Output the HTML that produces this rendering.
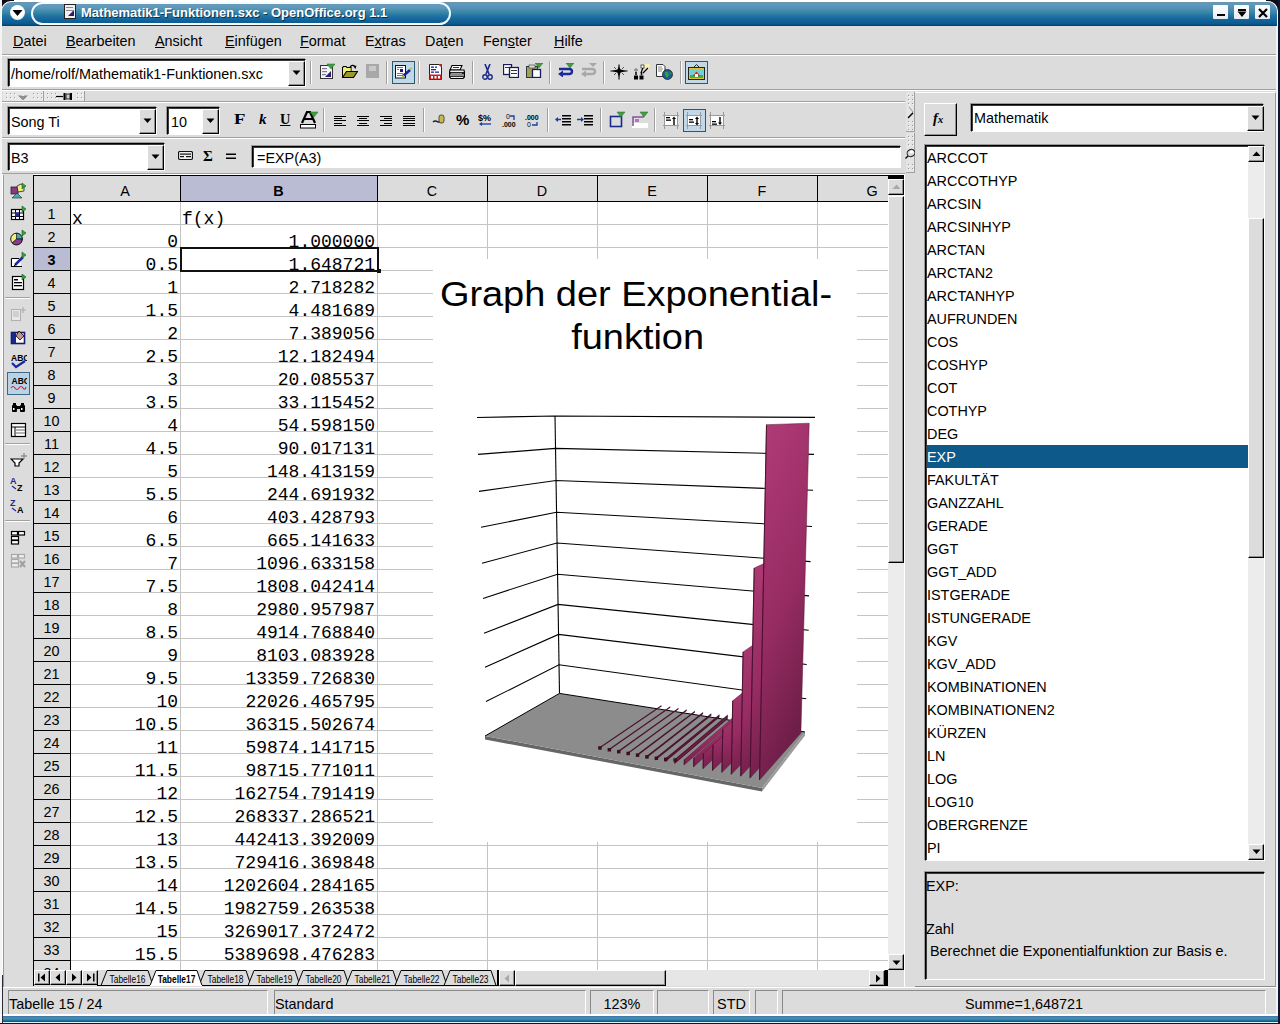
<!DOCTYPE html>
<html><head><meta charset="utf-8"><style>
*{margin:0;padding:0;box-sizing:border-box}
html,body{width:1280px;height:1024px;overflow:hidden;background:#dcdcdc;font-family:"Liberation Sans",sans-serif;font-size:14.4px;color:#000}
.ab{position:absolute}
.t{position:absolute;white-space:nowrap;line-height:1}
.mono{font-family:"Liberation Mono",monospace}
.sunk{position:absolute;background:#fff;border-top:1px solid #000;border-left:1px solid #000;border-right:1px solid #fff;border-bottom:1px solid #fff;box-shadow:inset 1px 1px 0 #3a3a3a,-1px -1px 0 #9a9a9a}
.btn{position:absolute;background:#dcdcdc;border-top:1px solid #fff;border-left:1px solid #fff;border-right:1px solid #000;border-bottom:1px solid #000;box-shadow:inset -1px -1px 0 #909090}
.sep{position:absolute;width:2px;border-left:1px solid #a0a0a0;border-right:1px solid #fff}
.hsep{position:absolute;height:2px;border-top:1px solid #a0a0a0;border-bottom:1px solid #fff}
</style></head><body>

<div class="ab" style="left:0;top:0;width:1280px;height:1024px;background:#dcdcdc"></div>
<div class="ab" style="left:0;top:0;width:14px;height:14px;background:#0a0a18"></div>
<div class="ab" style="left:1266px;top:0;width:14px;height:14px;background:#0a0a18"></div>
<div class="ab" style="left:1278px;top:0;width:2px;height:1024px;background:#10142a"></div>
<div class="ab" style="left:0;top:0;width:2px;height:1024px;background:#f4f4f4"></div>
<div class="ab" style="left:14px;top:0;width:1252px;height:2px;background:#fff"></div>
<div class="ab" style="left:1px;top:1px;width:1277px;height:25px;border-radius:10px 10px 0 0;background:#fff"></div>
<div class="ab" style="left:2px;top:2px;width:1275px;height:24px;border-radius:9px 9px 0 0;background:linear-gradient(#7090a4 0px,#5e9cbc 2px,#558fb8 6px,#3a88a8 10px,#2272a2 14px,#12649a 18px,#0a5a8e 22px,#003c5c 24px)"></div>
<div class="ab" style="left:31px;top:2px;width:420px;height:23px;border-radius:12px;border:2px solid #f4fbff;background:linear-gradient(#6a9cbc 0px,#5a98bc 4px,#3a88a8 8px,#2272a2 12px,#12649a 16px,#0a5a8e 20px)"></div>
<div class="ab" style="left:10px;top:5px;width:15px;height:15px;border-radius:50%;background:radial-gradient(circle at 50% 40%,#fff 50%,#d0d8e8)"></div>
<svg class="ab" style="left:11px;top:8px" width="13" height="10"><polygon points="1.5,2 11.5,2 6.5,8" fill="#000"/></svg>
<svg class="ab" style="left:64px;top:4px" width="13" height="16"><rect x="0.5" y="0.5" width="11" height="14" fill="#f0f0f0" stroke="#222"/><rect x="2" y="3" width="7" height="1" fill="#889"/><rect x="2" y="6" width="7" height="1" fill="#889"/><polygon points="4,12 10,6 10,12" fill="#2a1a6a"/></svg>
<div class="t" style="left:82px;top:7px;font-weight:bold;font-size:13px;color:#000;opacity:.55">Mathematik1-Funktionen.sxc - OpenOffice.org 1.1</div>
<div class="t" style="left:81px;top:6px;font-weight:bold;font-size:13px;color:#fff">Mathematik1-Funktionen.sxc - OpenOffice.org 1.1</div>
<div class="ab" style="left:1213px;top:5px;width:15px;height:14px;background:linear-gradient(#fff,#e6ecf4);border-radius:1px"></div>
<div class="ab" style="left:1217px;top:14px;width:8px;height:2px;background:#000"></div>
<div class="ab" style="left:1234px;top:5px;width:15px;height:14px;background:linear-gradient(#fff,#e6ecf4);border-radius:1px"></div>
<div class="ab" style="left:1238px;top:9px;width:8px;height:2px;background:#000"></div>
<svg class="ab" style="left:1237px;top:11px" width="10" height="7"><polygon points="0.5,0.5 9.5,0.5 5,6" fill="#000"/></svg>
<div class="ab" style="left:1255px;top:5px;width:15px;height:14px;background:linear-gradient(#fff,#e6ecf4);border-radius:1px"></div>
<svg class="ab" style="left:1258px;top:8px" width="10" height="10"><path d="M1,1 L9,9 M9,1 L1,9" stroke="#000" stroke-width="2.2"/></svg>
<div class="t" style="left:13px;top:34px;font-size:14.4px"><u>D</u>atei</div>
<div class="t" style="left:66px;top:34px;font-size:14.4px"><u>B</u>earbeiten</div>
<div class="t" style="left:155px;top:34px;font-size:14.4px"><u>A</u>nsicht</div>
<div class="t" style="left:225px;top:34px;font-size:14.4px"><u>E</u>infügen</div>
<div class="t" style="left:300px;top:34px;font-size:14.4px"><u>F</u>ormat</div>
<div class="t" style="left:365px;top:34px;font-size:14.4px">E<u>x</u>tras</div>
<div class="t" style="left:425px;top:34px;font-size:14.4px">Da<u>t</u>en</div>
<div class="t" style="left:483px;top:34px;font-size:14.4px">Fen<u>s</u>ter</div>
<div class="t" style="left:554px;top:34px;font-size:14.4px"><u>H</u>ilfe</div>
<div class="hsep" style="left:2px;top:54px;width:1276px"></div>
<div class="sunk" style="left:8px;top:59px;width:298px;height:28px"></div>
<div class="t" style="left:11px;top:67px;font-size:14.4px">/home/rolf/Mathematik1-Funktionen.sxc</div>
<div class="btn" style="left:288px;top:61px;width:17px;height:25px"></div>
<svg class="ab" style="left:292px;top:70px" width="9" height="6" viewBox="0 0 9 6"><polygon points="0.5,0.5 8.5,0.5 4.5,5" fill="#000"/></svg>
<div class="sep" style="left:310px;top:61px;height:23px"></div>
<div class="sep" style="left:386px;top:61px;height:23px"></div>
<div class="sep" style="left:418px;top:61px;height:23px"></div>
<div class="sep" style="left:472px;top:61px;height:23px"></div>
<div class="sep" style="left:549px;top:61px;height:23px"></div>
<div class="sep" style="left:603px;top:61px;height:23px"></div>
<div class="sep" style="left:680px;top:61px;height:23px"></div>
<svg class="ab" style="left:319px;top:63px" width="17" height="17" viewBox="0 0 17 17"><rect x="1.5" y="2.5" width="12" height="13" fill="#f4f4f4" stroke="#333"/><rect x="3" y="5" width="5" height="1.2" fill="#7a7a9a"/><rect x="3" y="8" width="5" height="1.2" fill="#7a7a9a"/><rect x="3" y="11" width="4" height="1.2" fill="#7a7a9a"/><polygon points="6,14 12,8 12,14" fill="#2a1a7a"/><polygon points="8,1 16,1 12,6" fill="#40a040" stroke="#2a6a2a" stroke-width="0.5"/></svg>
<svg class="ab" style="left:342px;top:64px" width="16" height="15" viewBox="0 0 16 15"><path d="M0.5,13.5 L0.5,3.5 L1.5,2.5 L4,2.5 L5,3.5 L9,3.5 L9,7" fill="#f0f078" stroke="#000" stroke-width="1.1"/><rect x="1.2" y="4" width="7.3" height="9" fill="#f0f078"/><polygon points="0.5,13.5 4.5,7.5 15.5,7.5 11.5,13.5" fill="#9a9a28" stroke="#000" stroke-width="1.1"/><path d="M8,3 Q10.5,0 13,2.5" stroke="#000" stroke-width="1.2" fill="none"/><polygon points="11.5,2.5 14.5,1.5 13.5,5" fill="#000"/></svg>
<svg class="ab" style="left:366px;top:64px" width="14" height="15" viewBox="0 0 14 15"><rect x="0" y="0" width="13" height="14" fill="#a8a8a8"/><rect x="3" y="2" width="7" height="5" fill="#c8c8c8"/></svg>
<div class="ab" style="left:392px;top:61px;width:23px;height:23px;background:#c0d8e8;border:1px solid #2a5a70"></div>
<svg class="ab" style="left:395px;top:65px" width="18" height="15" viewBox="0 0 18 15"><rect x="0.5" y="0.5" width="10" height="12.5" fill="#fff" stroke="#111"/><rect x="2" y="2" width="6" height="1" fill="#777"/><rect x="2" y="4" width="2" height="1" fill="#777"/><rect x="5" y="4" width="3" height="3" fill="#1a1a8a"/><rect x="2" y="8" width="6" height="1" fill="#777"/><rect x="2" y="10" width="6" height="1" fill="#777"/><path d="M8,11 L15,5" stroke="#1a2090" stroke-width="2.6"/><path d="M15,4 L17,3" stroke="#9ac070" stroke-width="1.5"/><path d="M7,12 L9,10.5" stroke="#c8d040" stroke-width="1.5"/></svg>
<svg class="ab" style="left:429px;top:64px" width="14" height="16" viewBox="0 0 14 16"><path d="M0.5,0.5 L10,0.5 L12.5,3 L12.5,15.5 L0.5,15.5 Z" fill="#fff" stroke="#222"/><polygon points="9.5,0 13,0 13,3.5" fill="#c02020"/><rect x="2" y="2.5" width="3" height="1.3" fill="#1a2aa0"/><rect x="6" y="2.5" width="2" height="1.3" fill="#1a2aa0"/><rect x="2" y="5" width="5" height="1.3" fill="#1a2aa0"/><rect x="2" y="7.5" width="3" height="1.3" fill="#1a2aa0"/><rect x="6" y="7.5" width="4" height="1.3" fill="#1a2aa0"/><rect x="0.5" y="10.5" width="12" height="5" fill="#c82020"/><rect x="2" y="12" width="2" height="2.5" fill="#fff"/><rect x="5.5" y="12" width="2" height="2.5" fill="#fff"/><rect x="9" y="12" width="2" height="2.5" fill="#fff"/></svg>
<svg class="ab" style="left:449px;top:65px" width="16" height="14" viewBox="0 0 16 14"><polygon points="3,0.5 13,0.5 11,5 1,5" fill="#fff" stroke="#000" stroke-width="1.1"/><rect x="4" y="2" width="6" height="1" fill="#1a2aa0"/><path d="M1,5 L15,5 L15.5,7 L15.5,12 L14,13.5 L2,13.5 L0.5,12 L0.5,7 Z" fill="#eee" stroke="#000" stroke-width="1.1"/><rect x="1" y="7" width="14" height="2.5" fill="#222"/><rect x="2" y="8" width="11" height="1" fill="#9a9a9a"/><rect x="1" y="10.5" width="14" height="1.5" fill="#333"/></svg>
<svg class="ab" style="left:482px;top:64px" width="11" height="16" viewBox="0 0 11 16"><path d="M3,0 L7,10 M8,0 L4,10" stroke="#1a2a8a" stroke-width="1.6"/><circle cx="3" cy="13" r="2.2" fill="none" stroke="#1a2a8a" stroke-width="1.4"/><circle cx="8" cy="13" r="2.2" fill="none" stroke="#1a2a8a" stroke-width="1.4"/></svg>
<svg class="ab" style="left:503px;top:64px" width="16" height="14" viewBox="0 0 16 14"><rect x="0.5" y="0.5" width="8" height="10" fill="#fff" stroke="#1a1a5a" stroke-width="1.3"/><rect x="6.5" y="3.5" width="9" height="10" fill="#fff" stroke="#1a1a5a" stroke-width="1.3"/><rect x="2" y="3" width="4" height="1" fill="#333"/><rect x="8" y="6" width="6" height="1" fill="#333"/><rect x="8" y="9" width="6" height="1" fill="#333"/></svg>
<svg class="ab" style="left:526px;top:63px" width="18" height="15" viewBox="0 0 18 15"><rect x="0.5" y="3.5" width="11" height="11" fill="#a0a060" stroke="#333"/><rect x="3" y="2" width="6" height="3" fill="#ddd" stroke="#333" stroke-width="0.6"/><rect x="6.5" y="6.5" width="8" height="8" fill="#fff" stroke="#1a1a5a" stroke-width="1.3"/><polygon points="9,0 17,0 13,5" fill="#40a040" stroke="#2a6a2a" stroke-width="0.5"/></svg>
<svg class="ab" style="left:557px;top:63px" width="18" height="14" viewBox="0 0 18 14"><path d="M2,6 L12,6 Q15,6 15,8.5 Q15,11 12,11 L5,11" stroke="#1a2a9a" stroke-width="2.4" fill="none"/><polygon points="1,11 6,7.5 6,14.5" fill="#1a2a9a"/><polygon points="9,0 17,0 13,5" fill="#40a040" stroke="#2a6a2a" stroke-width="0.5"/></svg>
<svg class="ab" style="left:580px;top:63px" width="18" height="14" viewBox="0 0 18 14"><path d="M2,6 L12,6 Q15,6 15,8.5 Q15,11 12,11 L5,11" stroke="#a8a8a8" stroke-width="2.4" fill="none"/><polygon points="1,11 6,7.5 6,14.5" fill="#a8a8a8"/><polygon points="9,0 17,0 13,4" fill="#a8a8a8"/></svg>
<svg class="ab" style="left:610px;top:64px" width="18" height="16" viewBox="0 0 18 16"><path d="M9,0.5 L9,15.5 M0.5,7 L17.5,7" stroke="#000" stroke-width="1.1"/><polygon points="9,2 11,7 9,13 7,7" fill="#000"/><polygon points="2,7 9,5 16,7 9,9" fill="#000"/><path d="M4,3 L6,5 M14,3 L12,5 M4,11 L6,9 M14,11 L12,9" stroke="#333" stroke-width="0.8"/></svg>
<svg class="ab" style="left:633px;top:64px" width="17" height="16" viewBox="0 0 17 16"><rect x="1" y="11.5" width="4" height="4" fill="#000"/><rect x="6.5" y="11.5" width="4" height="4" fill="#000"/><path d="M3,11 L3,8 M8.5,11 L8.5,8" stroke="#000" stroke-width="1.5"/><path d="M1,6 L5,6 M3,4 L3,8" stroke="#888" stroke-width="1.3"/><polygon points="11,0 17,0 16,6 12,4" fill="#f4f4b0"/><path d="M8,9 L10.5,2 M10,9 L15,4" stroke="#000" stroke-width="1.2"/><rect x="8" y="1" width="3" height="3" fill="#fff" stroke="#000" stroke-width="0.6"/></svg>
<svg class="ab" style="left:656px;top:64px" width="17" height="16" viewBox="0 0 17 16"><path d="M0.5,0.5 L7,0.5 L9,2.5 L9,12.5 L0.5,12.5 Z" fill="#fff" stroke="#333"/><path d="M2,3 L6,3 M2,5 L7,5 M2,7 L6,7" stroke="#888"/><circle cx="11.5" cy="10.5" r="5" fill="#1a5aa0" stroke="#222" stroke-width="0.8"/><path d="M8.5,9 Q10,7 12,8 L13,11 L11,14 L9.5,12 Z" fill="#30a040"/><path d="M13,7 L15.5,9 L15,11 Z" fill="#30a040"/></svg>
<div class="ab" style="left:685px;top:61px;width:23px;height:23px;background:#c0d8e8;border:1px solid #2a5a70"></div>
<svg class="ab" style="left:688px;top:64px" width="17" height="16" viewBox="0 0 17 16"><path d="M5.5,3.5 L8.5,0.5 L11.5,3.5" stroke="#222" fill="none"/><rect x="0.5" y="3.5" width="16" height="12" fill="#e0c030" stroke="#222"/><rect x="2" y="5" width="13" height="9" fill="#70d0d8"/><rect x="2" y="11" width="13" height="3" fill="#40b040"/><polygon points="5,12 8.5,7.5 12,12" fill="#d02020"/><rect x="7" y="10" width="3" height="3" fill="#fff"/></svg>
<div class="hsep" style="left:2px;top:89px;width:1274px"></div>
<div class="ab" style="left:3px;top:91px;width:41px;height:11px;background:#e8e8e8;border-bottom:1px solid #a0a0a0;border-right:1px solid #a0a0a0"></div>
<div class="ab" style="left:44px;top:91px;width:41px;height:11px;background:#e8e8e8;border-bottom:1px solid #a0a0a0;border-right:1px solid #a0a0a0"></div>
<svg class="ab" style="left:3px;top:91px" width="41" height="11" viewBox="0 0 41 11"><rect x="3" y="2" width="1" height="1" fill="#9a9a9a"/><rect x="4" y="3" width="1" height="1" fill="#fff"/><rect x="3" y="6" width="1" height="1" fill="#9a9a9a"/><rect x="4" y="7" width="1" height="1" fill="#fff"/><rect x="7" y="2" width="1" height="1" fill="#9a9a9a"/><rect x="8" y="3" width="1" height="1" fill="#fff"/><rect x="7" y="6" width="1" height="1" fill="#9a9a9a"/><rect x="8" y="7" width="1" height="1" fill="#fff"/><rect x="11" y="2" width="1" height="1" fill="#9a9a9a"/><rect x="12" y="3" width="1" height="1" fill="#fff"/><rect x="11" y="6" width="1" height="1" fill="#9a9a9a"/><rect x="12" y="7" width="1" height="1" fill="#fff"/><rect x="30" y="2" width="1" height="1" fill="#9a9a9a"/><rect x="31" y="3" width="1" height="1" fill="#fff"/><rect x="30" y="6" width="1" height="1" fill="#9a9a9a"/><rect x="31" y="7" width="1" height="1" fill="#fff"/><rect x="34" y="2" width="1" height="1" fill="#9a9a9a"/><rect x="35" y="3" width="1" height="1" fill="#fff"/><rect x="34" y="6" width="1" height="1" fill="#9a9a9a"/><rect x="35" y="7" width="1" height="1" fill="#fff"/><rect x="38" y="2" width="1" height="1" fill="#9a9a9a"/><rect x="39" y="3" width="1" height="1" fill="#fff"/><rect x="38" y="6" width="1" height="1" fill="#9a9a9a"/><rect x="39" y="7" width="1" height="1" fill="#fff"/></svg>
<svg class="ab" style="left:44px;top:91px" width="41" height="11" viewBox="0 0 41 11"><rect x="3" y="2" width="1" height="1" fill="#9a9a9a"/><rect x="4" y="3" width="1" height="1" fill="#fff"/><rect x="3" y="6" width="1" height="1" fill="#9a9a9a"/><rect x="4" y="7" width="1" height="1" fill="#fff"/><rect x="7" y="2" width="1" height="1" fill="#9a9a9a"/><rect x="8" y="3" width="1" height="1" fill="#fff"/><rect x="7" y="6" width="1" height="1" fill="#9a9a9a"/><rect x="8" y="7" width="1" height="1" fill="#fff"/><rect x="11" y="2" width="1" height="1" fill="#9a9a9a"/><rect x="12" y="3" width="1" height="1" fill="#fff"/><rect x="11" y="6" width="1" height="1" fill="#9a9a9a"/><rect x="12" y="7" width="1" height="1" fill="#fff"/><rect x="33" y="2" width="1" height="1" fill="#9a9a9a"/><rect x="34" y="3" width="1" height="1" fill="#fff"/><rect x="33" y="6" width="1" height="1" fill="#9a9a9a"/><rect x="34" y="7" width="1" height="1" fill="#fff"/><rect x="37" y="2" width="1" height="1" fill="#9a9a9a"/><rect x="38" y="3" width="1" height="1" fill="#fff"/><rect x="37" y="6" width="1" height="1" fill="#9a9a9a"/><rect x="38" y="7" width="1" height="1" fill="#fff"/></svg>
<svg class="ab" style="left:18px;top:95px" width="10" height="6" viewBox="0 0 10 6"><path d="M1,0.5 L5,4.5 L9,0.5 M3,0.5 L5,2.5 L7,0.5" stroke="#333" fill="none"/></svg>
<svg class="ab" style="left:56px;top:92px" width="17" height="9" viewBox="0 0 17 9"><path d="M0,4.5 L7,4.5" stroke="#000" stroke-width="1.2"/><rect x="7.5" y="1" width="2" height="7" fill="#000"/><rect x="10" y="2" width="4" height="5" fill="#ccc" stroke="#000" stroke-width="0.8"/><rect x="14" y="1" width="2" height="7" fill="#000"/></svg>
<div class="hsep" style="left:2px;top:101px;width:903px"></div>
<div class="sunk" style="left:8px;top:107px;width:149px;height:28px"></div>
<div class="t" style="left:11px;top:115px;font-size:14.4px">Song Ti</div>
<div class="btn" style="left:139px;top:109px;width:17px;height:25px"></div>
<svg class="ab" style="left:143px;top:118px" width="9" height="6" viewBox="0 0 9 6"><polygon points="0.5,0.5 8.5,0.5 4.5,5" fill="#000"/></svg>
<div class="sunk" style="left:167px;top:107px;width:53px;height:28px"></div>
<div class="t" style="left:171px;top:115px;font-size:14.4px">10</div>
<div class="btn" style="left:202px;top:109px;width:17px;height:25px"></div>
<svg class="ab" style="left:206px;top:118px" width="9" height="6" viewBox="0 0 9 6"><polygon points="0.5,0.5 8.5,0.5 4.5,5" fill="#000"/></svg>
<div class="sep" style="left:323px;top:108px;height:24px"></div>
<div class="sep" style="left:423px;top:108px;height:24px"></div>
<div class="sep" style="left:547px;top:108px;height:24px"></div>
<div class="sep" style="left:600px;top:108px;height:24px"></div>
<div class="sep" style="left:654px;top:108px;height:24px"></div>
<div class="t" style="left:234px;top:112px;font-family:'Liberation Serif',serif;font-weight:bold;font-size:15px;transform:scaleX(1.25);transform-origin:left">F</div>
<div class="t" style="left:259px;top:112px;font-family:'Liberation Serif',serif;font-weight:bold;font-style:italic;font-size:15px">k</div>
<div class="t" style="left:280px;top:112px;font-family:'Liberation Serif',serif;font-weight:bold;font-size:14.4px;text-decoration:underline">U</div>
<svg class="ab" style="left:300px;top:111px" width="19" height="18" viewBox="0 0 19 18"><path d="M2,12 L7,1 L10,1 L15,12 M4.5,8 L12.5,8" stroke="#000" stroke-width="2.2" fill="none"/><rect x="0.5" y="13.5" width="15" height="3.5" fill="#fff" stroke="#000"/><polygon points="10,1 18,1 14,6" fill="#40a040" stroke="#2a6a2a" stroke-width="0.5"/></svg>
<svg class="ab" style="left:334px;top:115px" width="12" height="12" viewBox="0 0 12 12"><rect x="0" y="1" width="12" height="1" fill="#000"/><rect x="0" y="3" width="8" height="1" fill="#000"/><rect x="0" y="5" width="12" height="1" fill="#000"/><rect x="0" y="8" width="8" height="1" fill="#000"/><rect x="0" y="10" width="12" height="1" fill="#000"/></svg>
<svg class="ab" style="left:357px;top:115px" width="12" height="12" viewBox="0 0 12 12"><rect x="0.0" y="1" width="12" height="1" fill="#000"/><rect x="2.0" y="3" width="8" height="1" fill="#000"/><rect x="0.0" y="5" width="12" height="1" fill="#000"/><rect x="2.0" y="8" width="8" height="1" fill="#000"/><rect x="0.0" y="10" width="12" height="1" fill="#000"/></svg>
<svg class="ab" style="left:380px;top:115px" width="12" height="12" viewBox="0 0 12 12"><rect x="0" y="1" width="12" height="1" fill="#000"/><rect x="4" y="3" width="8" height="1" fill="#000"/><rect x="0" y="5" width="12" height="1" fill="#000"/><rect x="4" y="8" width="8" height="1" fill="#000"/><rect x="0" y="10" width="12" height="1" fill="#000"/></svg>
<svg class="ab" style="left:403px;top:115px" width="12" height="12" viewBox="0 0 12 12"><rect x="0" y="1" width="12" height="1" fill="#000"/><rect x="0" y="3" width="12" height="1" fill="#000"/><rect x="0" y="5" width="12" height="1" fill="#000"/><rect x="0" y="8" width="12" height="1" fill="#000"/><rect x="0" y="10" width="12" height="1" fill="#000"/></svg>
<svg class="ab" style="left:432px;top:114px" width="15" height="12" viewBox="0 0 15 12"><path d="M1,8 Q3,6 6,8 L10,8" stroke="#222" stroke-width="1.5" fill="none"/><rect x="7" y="1" width="5" height="8" rx="2" fill="#c8b850" stroke="#333" stroke-width="0.8"/></svg>
<div class="t" style="left:456px;top:112px;font-weight:bold;font-size:15px">%</div>
<svg class="ab" style="left:478px;top:113px" width="15" height="15" viewBox="0 0 15 15"><text x="0" y="8" font-size="9" font-family="Liberation Sans" font-weight="bold">$%</text><path d="M3,11 L13,11" stroke="#1a3aa0" stroke-width="1.3"/><polygon points="1,11 4,9 4,13" fill="#1a3aa0"/></svg>
<svg class="ab" style="left:502px;top:113px" width="15" height="15" viewBox="0 0 15 15"><text x="4" y="6" font-size="7" font-family="Liberation Sans">0</text><text x="0" y="14" font-size="7" font-family="Liberation Sans" font-weight="bold">.000</text><path d="M8,3 L12,3 L12,7" stroke="#1a3aa0" stroke-width="1.3" fill="none"/></svg>
<svg class="ab" style="left:525px;top:113px" width="15" height="15" viewBox="0 0 15 15"><text x="0" y="7" font-size="7" font-family="Liberation Sans" font-weight="bold">.000</text><text x="2" y="14" font-size="7" font-family="Liberation Sans">0</text><path d="M12,9 L12,12 L7,12" stroke="#1a3aa0" stroke-width="1.3" fill="none"/></svg>
<svg class="ab" style="left:555px;top:113px" width="17" height="14" viewBox="0 0 17 14"><rect x="7" y="2" width="9" height="1.5" fill="#000"/><rect x="7" y="5" width="9" height="1.5" fill="#000"/><rect x="7" y="8" width="9" height="1.5" fill="#000"/><rect x="7" y="11" width="9" height="1.5" fill="#000"/><path d="M1,6.5 L6,6.5" stroke="#1a3aa0" stroke-width="1.5"/><polygon points="0,6.5 3,4 3,9" fill="#1a3aa0"/></svg>
<svg class="ab" style="left:577px;top:113px" width="17" height="14" viewBox="0 0 17 14"><rect x="7" y="2" width="9" height="1.5" fill="#000"/><rect x="7" y="5" width="9" height="1.5" fill="#000"/><rect x="7" y="8" width="9" height="1.5" fill="#000"/><rect x="7" y="11" width="9" height="1.5" fill="#000"/><path d="M0,6.5 L5,6.5" stroke="#1a3aa0" stroke-width="1.5"/><polygon points="7,6.5 4,4 4,9" fill="#1a3aa0"/></svg>
<svg class="ab" style="left:609px;top:111px" width="17" height="17" viewBox="0 0 17 17"><rect x="1.5" y="5.5" width="11" height="10" fill="none" stroke="#1a2a8a" stroke-width="1.6"/><polygon points="8,1 16,1 12,6" fill="#40a040" stroke="#2a6a2a" stroke-width="0.5"/></svg>
<svg class="ab" style="left:632px;top:111px" width="17" height="17" viewBox="0 0 17 17"><rect x="0" y="12" width="16" height="5" fill="#fff"/><path d="M1,15 L1,6 L12,6" stroke="#8050a0" stroke-width="1.5" fill="none"/><rect x="3" y="8" width="4" height="3" fill="#c070c0"/><polygon points="8,1 16,1 12,6" fill="#40a040" stroke="#2a6a2a" stroke-width="0.5"/></svg>
<svg class="ab" style="left:663px;top:112px" width="17" height="17" viewBox="0 0 17 17"><rect x="2" y="3.5" width="12" height="10" fill="#fff"/><path d="M1.5,0 L1.5,17 M14.5,0 L14.5,17 M0,3.5 L16,3.5 M0,13.5 L16,13.5" stroke="#9a9a9a"/><rect x="3" y="5" width="4" height="1.3" fill="#000"/><rect x="3" y="7.5" width="5" height="1.3" fill="#000"/><path d="M11,13 L11,6" stroke="#000" stroke-width="1.4"/><polygon points="9,7 11,4.5 13,7" fill="#000"/></svg>
<div class="ab" style="left:683px;top:109px;width:23px;height:23px;background:#c0d8e8;border:1px solid #2a5a70"></div>
<svg class="ab" style="left:686px;top:112px" width="17" height="17" viewBox="0 0 17 17"><rect x="2" y="3.5" width="12" height="10" fill="#fff"/><path d="M1.5,0 L1.5,17 M14.5,0 L14.5,17 M0,3.5 L16,3.5 M0,13.5 L16,13.5" stroke="#9a9a9a"/><rect x="3" y="7" width="4" height="1.3" fill="#000"/><rect x="3" y="9.5" width="5" height="1.3" fill="#000"/><path d="M11,6 L11,12" stroke="#000" stroke-width="1.4"/><polygon points="9,7 11,4.5 13,7" fill="#000"/><polygon points="9,11 11,13.5 13,11" fill="#000"/></svg>
<svg class="ab" style="left:709px;top:112px" width="17" height="17" viewBox="0 0 17 17"><rect x="2" y="3.5" width="12" height="10" fill="#fff"/><path d="M1.5,0 L1.5,17 M14.5,0 L14.5,17 M0,3.5 L16,3.5 M0,13.5 L16,13.5" stroke="#9a9a9a"/><rect x="3" y="9" width="4" height="1.3" fill="#000"/><rect x="3" y="11.5" width="5" height="1.3" fill="#000"/><path d="M11,5 L11,11" stroke="#000" stroke-width="1.4"/><polygon points="9,10.5 11,13 13,10.5" fill="#000"/></svg>
<div class="hsep" style="left:2px;top:137px;width:903px"></div>
<div class="sunk" style="left:8px;top:143px;width:157px;height:28px"></div>
<div class="t" style="left:11px;top:151px;font-size:14.4px">B3</div>
<div class="btn" style="left:147px;top:145px;width:17px;height:25px"></div>
<svg class="ab" style="left:151px;top:154px" width="9" height="6" viewBox="0 0 9 6"><polygon points="0.5,0.5 8.5,0.5 4.5,5" fill="#000"/></svg>
<svg class="ab" style="left:178px;top:151px" width="15" height="10" viewBox="0 0 15 10"><rect x="0.5" y="0.5" width="14" height="8" rx="1.5" fill="#eee" stroke="#111" stroke-width="1.2"/><rect x="2" y="2.5" width="11" height="1.2" fill="#111"/><rect x="2" y="5" width="4" height="1.2" fill="#111"/><rect x="8" y="5" width="5" height="1.2" fill="#111"/></svg>
<div class="t" style="left:203px;top:149px;font-family:'Liberation Serif',serif;font-weight:bold;font-size:15px">&Sigma;</div>
<svg class="ab" style="left:226px;top:153px" width="10" height="7" viewBox="0 0 10 7"><rect x="0" y="0.5" width="10" height="1.5" fill="#000"/><rect x="0" y="4.5" width="10" height="1.5" fill="#000"/></svg>
<div class="sunk" style="left:252px;top:146px;width:649px;height:22px"></div>
<div class="t" style="left:257px;top:151px;font-size:14.4px">=EXP(A3)</div>
<div class="hsep" style="left:2px;top:173px;width:903px"></div>
<div class="ab" style="left:2px;top:174px;width:31px;height:813px;background:#dcdcdc;border-left:1px solid #fff"></div>
<div class="ab" style="left:33px;top:175px;width:855px;height:795px;background:#fff;overflow:hidden">
<div class="ab" style="left:37px;top:49px;width:900px;height:1px;background:#c4c4c4"></div>
<div class="ab" style="left:37px;top:72px;width:900px;height:1px;background:#c4c4c4"></div>
<div class="ab" style="left:37px;top:95px;width:900px;height:1px;background:#c4c4c4"></div>
<div class="ab" style="left:37px;top:118px;width:900px;height:1px;background:#c4c4c4"></div>
<div class="ab" style="left:37px;top:141px;width:900px;height:1px;background:#c4c4c4"></div>
<div class="ab" style="left:37px;top:164px;width:900px;height:1px;background:#c4c4c4"></div>
<div class="ab" style="left:37px;top:187px;width:900px;height:1px;background:#c4c4c4"></div>
<div class="ab" style="left:37px;top:210px;width:900px;height:1px;background:#c4c4c4"></div>
<div class="ab" style="left:37px;top:233px;width:900px;height:1px;background:#c4c4c4"></div>
<div class="ab" style="left:37px;top:256px;width:900px;height:1px;background:#c4c4c4"></div>
<div class="ab" style="left:37px;top:279px;width:900px;height:1px;background:#c4c4c4"></div>
<div class="ab" style="left:37px;top:302px;width:900px;height:1px;background:#c4c4c4"></div>
<div class="ab" style="left:37px;top:325px;width:900px;height:1px;background:#c4c4c4"></div>
<div class="ab" style="left:37px;top:348px;width:900px;height:1px;background:#c4c4c4"></div>
<div class="ab" style="left:37px;top:371px;width:900px;height:1px;background:#c4c4c4"></div>
<div class="ab" style="left:37px;top:394px;width:900px;height:1px;background:#c4c4c4"></div>
<div class="ab" style="left:37px;top:417px;width:900px;height:1px;background:#c4c4c4"></div>
<div class="ab" style="left:37px;top:440px;width:900px;height:1px;background:#c4c4c4"></div>
<div class="ab" style="left:37px;top:463px;width:900px;height:1px;background:#c4c4c4"></div>
<div class="ab" style="left:37px;top:486px;width:900px;height:1px;background:#c4c4c4"></div>
<div class="ab" style="left:37px;top:509px;width:900px;height:1px;background:#c4c4c4"></div>
<div class="ab" style="left:37px;top:532px;width:900px;height:1px;background:#c4c4c4"></div>
<div class="ab" style="left:37px;top:555px;width:900px;height:1px;background:#c4c4c4"></div>
<div class="ab" style="left:37px;top:578px;width:900px;height:1px;background:#c4c4c4"></div>
<div class="ab" style="left:37px;top:601px;width:900px;height:1px;background:#c4c4c4"></div>
<div class="ab" style="left:37px;top:624px;width:900px;height:1px;background:#c4c4c4"></div>
<div class="ab" style="left:37px;top:647px;width:900px;height:1px;background:#c4c4c4"></div>
<div class="ab" style="left:37px;top:670px;width:900px;height:1px;background:#c4c4c4"></div>
<div class="ab" style="left:37px;top:693px;width:900px;height:1px;background:#c4c4c4"></div>
<div class="ab" style="left:37px;top:716px;width:900px;height:1px;background:#c4c4c4"></div>
<div class="ab" style="left:37px;top:739px;width:900px;height:1px;background:#c4c4c4"></div>
<div class="ab" style="left:37px;top:762px;width:900px;height:1px;background:#c4c4c4"></div>
<div class="ab" style="left:37px;top:785px;width:900px;height:1px;background:#c4c4c4"></div>
<div class="ab" style="left:37px;top:808px;width:900px;height:1px;background:#c4c4c4"></div>
<div class="ab" style="left:37px;top:831px;width:900px;height:1px;background:#c4c4c4"></div>
<div class="ab" style="left:147px;top:26px;width:1px;height:800px;background:#c4c4c4"></div>
<div class="ab" style="left:344px;top:26px;width:1px;height:800px;background:#c4c4c4"></div>
<div class="ab" style="left:454px;top:26px;width:1px;height:800px;background:#c4c4c4"></div>
<div class="ab" style="left:564px;top:26px;width:1px;height:800px;background:#c4c4c4"></div>
<div class="ab" style="left:674px;top:26px;width:1px;height:800px;background:#c4c4c4"></div>
<div class="ab" style="left:784px;top:26px;width:1px;height:800px;background:#c4c4c4"></div>
<div class="ab" style="left:894px;top:26px;width:1px;height:800px;background:#c4c4c4"></div>
<div class="ab" style="left:0;top:0;width:900px;height:27px;background:#dcdcdc;border-top:1px solid #000;border-bottom:1px solid #000"></div>
<div class="ab" style="left:147px;top:1px;width:197px;height:25px;background:#b9bcd2"></div>
<div class="ab" style="left:0;top:0;width:1px;height:800px;background:#000"></div>
<div class="ab" style="left:37px;top:0;width:1px;height:27px;background:#000"></div>
<div class="t" style="left:37px;width:110px;text-align:center;top:9px;font-size:14.4px;font-weight:normal">A</div>
<div class="ab" style="left:147px;top:0;width:1px;height:27px;background:#000"></div>
<div class="t" style="left:147px;width:197px;text-align:center;top:9px;font-size:14.4px;font-weight:bold">B</div>
<div class="ab" style="left:344px;top:0;width:1px;height:27px;background:#000"></div>
<div class="t" style="left:344px;width:110px;text-align:center;top:9px;font-size:14.4px;font-weight:normal">C</div>
<div class="ab" style="left:454px;top:0;width:1px;height:27px;background:#000"></div>
<div class="t" style="left:454px;width:110px;text-align:center;top:9px;font-size:14.4px;font-weight:normal">D</div>
<div class="ab" style="left:564px;top:0;width:1px;height:27px;background:#000"></div>
<div class="t" style="left:564px;width:110px;text-align:center;top:9px;font-size:14.4px;font-weight:normal">E</div>
<div class="ab" style="left:674px;top:0;width:1px;height:27px;background:#000"></div>
<div class="t" style="left:674px;width:110px;text-align:center;top:9px;font-size:14.4px;font-weight:normal">F</div>
<div class="ab" style="left:784px;top:0;width:1px;height:27px;background:#000"></div>
<div class="t" style="left:784px;width:110px;text-align:center;top:9px;font-size:14.4px;font-weight:normal">G</div>
<div class="ab" style="left:0;top:27px;width:38px;height:800px;background:#dcdcdc;border-right:1px solid #000;border-left:1px solid #000"></div>
<div class="ab" style="left:1px;top:72px;width:36px;height:23px;background:#b9bcd2"></div>
<div class="ab" style="left:0;top:49px;width:38px;height:1px;background:#000"></div>
<div class="t" style="left:0;width:37px;text-align:center;top:32px;font-size:14.4px;font-weight:normal">1</div>
<div class="ab" style="left:0;top:72px;width:38px;height:1px;background:#000"></div>
<div class="t" style="left:0;width:37px;text-align:center;top:55px;font-size:14.4px;font-weight:normal">2</div>
<div class="ab" style="left:0;top:95px;width:38px;height:1px;background:#000"></div>
<div class="t" style="left:0;width:37px;text-align:center;top:78px;font-size:14.4px;font-weight:bold">3</div>
<div class="ab" style="left:0;top:118px;width:38px;height:1px;background:#000"></div>
<div class="t" style="left:0;width:37px;text-align:center;top:101px;font-size:14.4px;font-weight:normal">4</div>
<div class="ab" style="left:0;top:141px;width:38px;height:1px;background:#000"></div>
<div class="t" style="left:0;width:37px;text-align:center;top:124px;font-size:14.4px;font-weight:normal">5</div>
<div class="ab" style="left:0;top:164px;width:38px;height:1px;background:#000"></div>
<div class="t" style="left:0;width:37px;text-align:center;top:147px;font-size:14.4px;font-weight:normal">6</div>
<div class="ab" style="left:0;top:187px;width:38px;height:1px;background:#000"></div>
<div class="t" style="left:0;width:37px;text-align:center;top:170px;font-size:14.4px;font-weight:normal">7</div>
<div class="ab" style="left:0;top:210px;width:38px;height:1px;background:#000"></div>
<div class="t" style="left:0;width:37px;text-align:center;top:193px;font-size:14.4px;font-weight:normal">8</div>
<div class="ab" style="left:0;top:233px;width:38px;height:1px;background:#000"></div>
<div class="t" style="left:0;width:37px;text-align:center;top:216px;font-size:14.4px;font-weight:normal">9</div>
<div class="ab" style="left:0;top:256px;width:38px;height:1px;background:#000"></div>
<div class="t" style="left:0;width:37px;text-align:center;top:239px;font-size:14.4px;font-weight:normal">10</div>
<div class="ab" style="left:0;top:279px;width:38px;height:1px;background:#000"></div>
<div class="t" style="left:0;width:37px;text-align:center;top:262px;font-size:14.4px;font-weight:normal">11</div>
<div class="ab" style="left:0;top:302px;width:38px;height:1px;background:#000"></div>
<div class="t" style="left:0;width:37px;text-align:center;top:285px;font-size:14.4px;font-weight:normal">12</div>
<div class="ab" style="left:0;top:325px;width:38px;height:1px;background:#000"></div>
<div class="t" style="left:0;width:37px;text-align:center;top:308px;font-size:14.4px;font-weight:normal">13</div>
<div class="ab" style="left:0;top:348px;width:38px;height:1px;background:#000"></div>
<div class="t" style="left:0;width:37px;text-align:center;top:331px;font-size:14.4px;font-weight:normal">14</div>
<div class="ab" style="left:0;top:371px;width:38px;height:1px;background:#000"></div>
<div class="t" style="left:0;width:37px;text-align:center;top:354px;font-size:14.4px;font-weight:normal">15</div>
<div class="ab" style="left:0;top:394px;width:38px;height:1px;background:#000"></div>
<div class="t" style="left:0;width:37px;text-align:center;top:377px;font-size:14.4px;font-weight:normal">16</div>
<div class="ab" style="left:0;top:417px;width:38px;height:1px;background:#000"></div>
<div class="t" style="left:0;width:37px;text-align:center;top:400px;font-size:14.4px;font-weight:normal">17</div>
<div class="ab" style="left:0;top:440px;width:38px;height:1px;background:#000"></div>
<div class="t" style="left:0;width:37px;text-align:center;top:423px;font-size:14.4px;font-weight:normal">18</div>
<div class="ab" style="left:0;top:463px;width:38px;height:1px;background:#000"></div>
<div class="t" style="left:0;width:37px;text-align:center;top:446px;font-size:14.4px;font-weight:normal">19</div>
<div class="ab" style="left:0;top:486px;width:38px;height:1px;background:#000"></div>
<div class="t" style="left:0;width:37px;text-align:center;top:469px;font-size:14.4px;font-weight:normal">20</div>
<div class="ab" style="left:0;top:509px;width:38px;height:1px;background:#000"></div>
<div class="t" style="left:0;width:37px;text-align:center;top:492px;font-size:14.4px;font-weight:normal">21</div>
<div class="ab" style="left:0;top:532px;width:38px;height:1px;background:#000"></div>
<div class="t" style="left:0;width:37px;text-align:center;top:515px;font-size:14.4px;font-weight:normal">22</div>
<div class="ab" style="left:0;top:555px;width:38px;height:1px;background:#000"></div>
<div class="t" style="left:0;width:37px;text-align:center;top:538px;font-size:14.4px;font-weight:normal">23</div>
<div class="ab" style="left:0;top:578px;width:38px;height:1px;background:#000"></div>
<div class="t" style="left:0;width:37px;text-align:center;top:561px;font-size:14.4px;font-weight:normal">24</div>
<div class="ab" style="left:0;top:601px;width:38px;height:1px;background:#000"></div>
<div class="t" style="left:0;width:37px;text-align:center;top:584px;font-size:14.4px;font-weight:normal">25</div>
<div class="ab" style="left:0;top:624px;width:38px;height:1px;background:#000"></div>
<div class="t" style="left:0;width:37px;text-align:center;top:607px;font-size:14.4px;font-weight:normal">26</div>
<div class="ab" style="left:0;top:647px;width:38px;height:1px;background:#000"></div>
<div class="t" style="left:0;width:37px;text-align:center;top:630px;font-size:14.4px;font-weight:normal">27</div>
<div class="ab" style="left:0;top:670px;width:38px;height:1px;background:#000"></div>
<div class="t" style="left:0;width:37px;text-align:center;top:653px;font-size:14.4px;font-weight:normal">28</div>
<div class="ab" style="left:0;top:693px;width:38px;height:1px;background:#000"></div>
<div class="t" style="left:0;width:37px;text-align:center;top:676px;font-size:14.4px;font-weight:normal">29</div>
<div class="ab" style="left:0;top:716px;width:38px;height:1px;background:#000"></div>
<div class="t" style="left:0;width:37px;text-align:center;top:699px;font-size:14.4px;font-weight:normal">30</div>
<div class="ab" style="left:0;top:739px;width:38px;height:1px;background:#000"></div>
<div class="t" style="left:0;width:37px;text-align:center;top:722px;font-size:14.4px;font-weight:normal">31</div>
<div class="ab" style="left:0;top:762px;width:38px;height:1px;background:#000"></div>
<div class="t" style="left:0;width:37px;text-align:center;top:745px;font-size:14.4px;font-weight:normal">32</div>
<div class="ab" style="left:0;top:785px;width:38px;height:1px;background:#000"></div>
<div class="t" style="left:0;width:37px;text-align:center;top:768px;font-size:14.4px;font-weight:normal">33</div>
<div class="ab" style="left:0;top:808px;width:38px;height:1px;background:#000"></div>
<div class="t" style="left:0;width:37px;text-align:center;top:791px;font-size:14.4px;font-weight:normal">34</div>
<div class="ab" style="left:0;top:831px;width:38px;height:1px;background:#000"></div>
<div class="t" style="left:0;width:37px;text-align:center;top:814px;font-size:14.4px;font-weight:normal">35</div>
<div class="t mono" style="left:39px;top:35px;font-size:18px">x</div>
<div class="t mono" style="left:149px;top:35px;font-size:18px">f(x)</div>
<div class="t mono" style="right:710px;top:58px;font-size:18px">0</div>
<div class="t mono" style="right:513px;top:58px;font-size:18px">1.000000</div>
<div class="t mono" style="right:710px;top:81px;font-size:18px">0.5</div>
<div class="t mono" style="right:513px;top:81px;font-size:18px">1.648721</div>
<div class="t mono" style="right:710px;top:104px;font-size:18px">1</div>
<div class="t mono" style="right:513px;top:104px;font-size:18px">2.718282</div>
<div class="t mono" style="right:710px;top:127px;font-size:18px">1.5</div>
<div class="t mono" style="right:513px;top:127px;font-size:18px">4.481689</div>
<div class="t mono" style="right:710px;top:150px;font-size:18px">2</div>
<div class="t mono" style="right:513px;top:150px;font-size:18px">7.389056</div>
<div class="t mono" style="right:710px;top:173px;font-size:18px">2.5</div>
<div class="t mono" style="right:513px;top:173px;font-size:18px">12.182494</div>
<div class="t mono" style="right:710px;top:196px;font-size:18px">3</div>
<div class="t mono" style="right:513px;top:196px;font-size:18px">20.085537</div>
<div class="t mono" style="right:710px;top:219px;font-size:18px">3.5</div>
<div class="t mono" style="right:513px;top:219px;font-size:18px">33.115452</div>
<div class="t mono" style="right:710px;top:242px;font-size:18px">4</div>
<div class="t mono" style="right:513px;top:242px;font-size:18px">54.598150</div>
<div class="t mono" style="right:710px;top:265px;font-size:18px">4.5</div>
<div class="t mono" style="right:513px;top:265px;font-size:18px">90.017131</div>
<div class="t mono" style="right:710px;top:288px;font-size:18px">5</div>
<div class="t mono" style="right:513px;top:288px;font-size:18px">148.413159</div>
<div class="t mono" style="right:710px;top:311px;font-size:18px">5.5</div>
<div class="t mono" style="right:513px;top:311px;font-size:18px">244.691932</div>
<div class="t mono" style="right:710px;top:334px;font-size:18px">6</div>
<div class="t mono" style="right:513px;top:334px;font-size:18px">403.428793</div>
<div class="t mono" style="right:710px;top:357px;font-size:18px">6.5</div>
<div class="t mono" style="right:513px;top:357px;font-size:18px">665.141633</div>
<div class="t mono" style="right:710px;top:380px;font-size:18px">7</div>
<div class="t mono" style="right:513px;top:380px;font-size:18px">1096.633158</div>
<div class="t mono" style="right:710px;top:403px;font-size:18px">7.5</div>
<div class="t mono" style="right:513px;top:403px;font-size:18px">1808.042414</div>
<div class="t mono" style="right:710px;top:426px;font-size:18px">8</div>
<div class="t mono" style="right:513px;top:426px;font-size:18px">2980.957987</div>
<div class="t mono" style="right:710px;top:449px;font-size:18px">8.5</div>
<div class="t mono" style="right:513px;top:449px;font-size:18px">4914.768840</div>
<div class="t mono" style="right:710px;top:472px;font-size:18px">9</div>
<div class="t mono" style="right:513px;top:472px;font-size:18px">8103.083928</div>
<div class="t mono" style="right:710px;top:495px;font-size:18px">9.5</div>
<div class="t mono" style="right:513px;top:495px;font-size:18px">13359.726830</div>
<div class="t mono" style="right:710px;top:518px;font-size:18px">10</div>
<div class="t mono" style="right:513px;top:518px;font-size:18px">22026.465795</div>
<div class="t mono" style="right:710px;top:541px;font-size:18px">10.5</div>
<div class="t mono" style="right:513px;top:541px;font-size:18px">36315.502674</div>
<div class="t mono" style="right:710px;top:564px;font-size:18px">11</div>
<div class="t mono" style="right:513px;top:564px;font-size:18px">59874.141715</div>
<div class="t mono" style="right:710px;top:587px;font-size:18px">11.5</div>
<div class="t mono" style="right:513px;top:587px;font-size:18px">98715.771011</div>
<div class="t mono" style="right:710px;top:610px;font-size:18px">12</div>
<div class="t mono" style="right:513px;top:610px;font-size:18px">162754.791419</div>
<div class="t mono" style="right:710px;top:633px;font-size:18px">12.5</div>
<div class="t mono" style="right:513px;top:633px;font-size:18px">268337.286521</div>
<div class="t mono" style="right:710px;top:656px;font-size:18px">13</div>
<div class="t mono" style="right:513px;top:656px;font-size:18px">442413.392009</div>
<div class="t mono" style="right:710px;top:679px;font-size:18px">13.5</div>
<div class="t mono" style="right:513px;top:679px;font-size:18px">729416.369848</div>
<div class="t mono" style="right:710px;top:702px;font-size:18px">14</div>
<div class="t mono" style="right:513px;top:702px;font-size:18px">1202604.284165</div>
<div class="t mono" style="right:710px;top:725px;font-size:18px">14.5</div>
<div class="t mono" style="right:513px;top:725px;font-size:18px">1982759.263538</div>
<div class="t mono" style="right:710px;top:748px;font-size:18px">15</div>
<div class="t mono" style="right:513px;top:748px;font-size:18px">3269017.372472</div>
<div class="t mono" style="right:710px;top:771px;font-size:18px">15.5</div>
<div class="t mono" style="right:513px;top:771px;font-size:18px">5389698.476283</div>
<div class="t mono" style="right:710px;top:794px;font-size:18px">16</div>
<div class="t mono" style="right:513px;top:794px;font-size:18px">8886110.520508</div>
<div class="ab" style="left:147px;top:72px;width:199px;height:25px;border:2px solid #111"></div>
<div class="ab" style="left:344px;top:94px;width:4px;height:4px;background:#111"></div>
<div class="ab" style="left:400px;top:84px;width:424px;height:583px;background:#fff"></div>
</div>
<svg class="ab" style="left:0;top:0" width="1280" height="1024" viewBox="0 0 1280 1024"><defs><linearGradient id="bg1" x1="0" y1="0" x2="0.3" y2="1"><stop offset="0" stop-color="#b23c78"/><stop offset="0.6" stop-color="#962c62"/><stop offset="1" stop-color="#6e1e48"/></linearGradient></defs><text x="636" y="306" text-anchor="middle" font-family="Liberation Sans" font-size="34.5" transform="translate(636,0) scale(1.1,1) translate(-636,0)">Graph der Exponential-</text><text x="637.5" y="349" text-anchor="middle" font-family="Liberation Sans" font-size="34.5" transform="translate(636,0) scale(1.1,1) translate(-636,0)">funktion</text><polyline points="477,417.5 555,416 815,417.4" fill="none" stroke="#000" stroke-width="1.1"/><polyline points="478,454.4 555.6,448.4 814,454.4" fill="none" stroke="#000" stroke-width="1.1"/><polyline points="479,491.4 556,480.5 813,490.2" fill="none" stroke="#000" stroke-width="1.1"/><polyline points="481,527.3 556.5,512.2 812,526.5" fill="none" stroke="#000" stroke-width="1.1"/><polyline points="482,563.3 557,543 810.5,561.6" fill="none" stroke="#000" stroke-width="1.1"/><polyline points="483,598.4 557.5,574.2 809,595.9" fill="none" stroke="#000" stroke-width="1.1"/><polyline points="484,633.3 558,604.4 808.7,630.2" fill="none" stroke="#000" stroke-width="1.1"/><polyline points="485,667.2 558.5,634.4 806.7,664.5" fill="none" stroke="#000" stroke-width="1.1"/><polyline points="486,701.6 559,664.8 806.2,698.8" fill="none" stroke="#000" stroke-width="1.1"/><line x1="555" y1="416" x2="559.5" y2="693.4" stroke="#000" stroke-width="1.1"/><polygon points="485,736 762,788 762,791.5 485,739.5" fill="#666"/><polygon points="762,788 805,732 805,735.5 762,791.5" fill="#9a9a9a"/><polygon points="485,736 559.5,693.4 805,732 762,788" fill="#8c8c8c"/><polyline points="485,736 559.5,693.4 805,732" fill="none" stroke="#000" stroke-width="1"/><polygon points="599.7,747.7 599.7,747.7 661.5,705.8 661.5,705.8" fill="#7a2048" stroke="#4a1430" stroke-width="1.2"/><rect x="598.2" y="746.2" width="3.5" height="3.5" fill="#3a1020"/><polygon points="609.1,749.6 609.1,749.5 669.7,707.3 669.7,707.4" fill="#7a2048" stroke="#4a1430" stroke-width="1.2"/><rect x="607.6" y="748.0" width="3.5" height="3.5" fill="#3a1020"/><polygon points="618.5,751.5 618.5,751.4 677.9,708.9 677.9,709.0" fill="#7a2048" stroke="#4a1430" stroke-width="1.2"/><rect x="617.0" y="749.9" width="3.5" height="3.5" fill="#3a1020"/><polygon points="627.9,753.4 627.9,753.2 686.1,710.4 686.1,710.6" fill="#7a2048" stroke="#4a1430" stroke-width="1.2"/><rect x="626.4" y="751.7" width="3.5" height="3.5" fill="#3a1020"/><polygon points="637.3,755.3 637.3,754.9 694.3,711.9 694.3,712.2" fill="#7a2048" stroke="#4a1430" stroke-width="1.2"/><rect x="635.8" y="753.4" width="3.5" height="3.5" fill="#3a1020"/><polygon points="646.7,757.2 646.7,756.6 702.5,713.2 702.5,713.8" fill="#7a2048" stroke="#4a1430" stroke-width="1.2"/><rect x="645.2" y="755.1" width="3.5" height="3.5" fill="#3a1020"/><polygon points="656.1,759.1 656.1,758.0 710.7,714.4 710.7,715.4" fill="#7a2048" stroke="#4a1430" stroke-width="1.2"/><rect x="654.6" y="756.5" width="3.5" height="3.5" fill="#3a1020"/><polygon points="665.5,761.0 665.5,759.1 718.9,715.4 718.9,717.0" fill="#7a2048" stroke="#4a1430" stroke-width="1.2"/><rect x="664.0" y="757.6" width="3.5" height="3.5" fill="#3a1020"/><polygon points="674.9,762.9 675.0,759.8 727.2,715.9 727.1,718.6" fill="#7a2048" stroke="#4a1430" stroke-width="1.2"/><rect x="673.4" y="758.3" width="3.5" height="3.5" fill="#3a1020"/><polygon points="684.3,764.8 684.4,759.5 735.4,715.6 735.3,720.2" fill="url(#bg1)" stroke="#5a1838" stroke-width="0.5"/><line x1="684.3" y1="764.8" x2="684.4" y2="759.5" stroke="#4a1030" stroke-width="1"/><polygon points="693.7,766.7 693.9,757.7 743.7,714.0 743.5,721.8" fill="url(#bg1)" stroke="#5a1838" stroke-width="0.5"/><line x1="693.7" y1="766.7" x2="693.9" y2="757.7" stroke="#4a1030" stroke-width="1"/><polygon points="703.1,768.6 703.4,753.4 752.1,710.1 751.7,723.4" fill="url(#bg1)" stroke="#5a1838" stroke-width="0.5"/><line x1="703.1" y1="768.6" x2="703.4" y2="753.4" stroke="#4a1030" stroke-width="1"/><polygon points="712.5,770.5 713.0,744.8 760.5,702.6 759.9,725.0" fill="url(#bg1)" stroke="#5a1838" stroke-width="0.5"/><line x1="712.5" y1="770.5" x2="713.0" y2="744.8" stroke="#4a1030" stroke-width="1"/><polygon points="721.9,772.4 722.8,728.9 769.1,688.7 768.1,726.6" fill="url(#bg1)" stroke="#5a1838" stroke-width="0.5"/><line x1="721.9" y1="772.4" x2="722.8" y2="728.9" stroke="#4a1030" stroke-width="1"/><polygon points="731.3,774.3 732.7,700.8 778.0,664.1 776.3,728.2" fill="url(#bg1)" stroke="#5a1838" stroke-width="0.5"/><line x1="731.3" y1="774.3" x2="732.7" y2="700.8" stroke="#4a1030" stroke-width="1"/><polygon points="740.7,776.2 743.1,651.9 787.4,621.4 784.5,729.8" fill="url(#bg1)" stroke="#5a1838" stroke-width="0.5"/><line x1="740.7" y1="776.2" x2="743.1" y2="651.9" stroke="#4a1030" stroke-width="1"/><polygon points="750.1,778.1 754.2,568.0 797.6,548.2 792.7,731.4" fill="url(#bg1)" stroke="#5a1838" stroke-width="0.5"/><line x1="750.1" y1="778.1" x2="754.2" y2="568.0" stroke="#4a1030" stroke-width="1"/><polygon points="759.5,780.0 766.5,424.7 809.2,423.2 800.9,733.0" fill="url(#bg1)" stroke="#5a1838" stroke-width="0.5"/><line x1="759.5" y1="780.0" x2="766.5" y2="424.7" stroke="#4a1030" stroke-width="1"/></svg>
<div class="ab" style="left:3px;top:175px;width:1px;height:812px;background:#9a9a9a"></div>
<svg class="ab" style="left:10px;top:182px" width="17" height="17" viewBox="0 0 17 17"><rect x="1" y="5" width="7" height="7" fill="#8a3a8a" stroke="#222" stroke-width="0.8"/><path d="M7,4 L11,2 L14,4 L14,9 L8,10 Z" fill="#f0f080" stroke="#222" stroke-width="0.8"/><polygon points="2,16 7,11 12,16" fill="#40b0b0" stroke="#222" stroke-width="0.6"/><polygon points="12,1 16,4 12,7" fill="#3aa03a" stroke="#1a5a1a" stroke-width="0.6"/></svg>
<svg class="ab" style="left:10px;top:205px" width="17" height="17" viewBox="0 0 17 17"><rect x="1.5" y="4.5" width="12" height="10" fill="#fff" stroke="#000" stroke-width="1.2"/><path d="M1.5,8 L13.5,8 M1.5,11.5 L13.5,11.5 M5.5,4.5 L5.5,14.5 M9.5,4.5 L9.5,14.5" stroke="#000"/><rect x="5" y="7.5" width="4" height="4" fill="#2a2aa0"/><polygon points="12,1 16,4 12,7" fill="#3aa03a" stroke="#1a5a1a" stroke-width="0.6"/></svg>
<svg class="ab" style="left:10px;top:229px" width="17" height="17" viewBox="0 0 17 17"><circle cx="6.5" cy="10" r="5.8" fill="#f0f080" stroke="#000" stroke-width="0.9"/><path d="M6.5,10 L6.5,4.2 A5.8,5.8 0 0,1 12.3,10 Z" fill="#40a8b0" stroke="#000" stroke-width="0.6"/><path d="M6.5,10 L12.3,10 A5.8,5.8 0 0,1 2,13.8 Z" fill="#8a3a8a" stroke="#000" stroke-width="0.6"/><polygon points="12,1 16,4 12,7" fill="#3aa03a" stroke="#1a5a1a" stroke-width="0.6"/></svg>
<svg class="ab" style="left:10px;top:251px" width="17" height="17" viewBox="0 0 17 17"><path d="M1.5,7.5 L9,7.5 M1.5,7.5 L1.5,15.5 L12,15.5" stroke="#000" stroke-width="1.2" fill="#fff"/><rect x="2" y="8" width="9" height="7" fill="#fff"/><path d="M5,14 L13,6" stroke="#1a2aa0" stroke-width="2.5"/><path d="M4,15 L6,13" stroke="#000" stroke-width="1"/><polygon points="12,1 16,4 12,7" fill="#3aa03a" stroke="#1a5a1a" stroke-width="0.6"/></svg>
<svg class="ab" style="left:10px;top:274px" width="17" height="17" viewBox="0 0 17 17"><rect x="2.5" y="2.5" width="11" height="13" fill="#fff" stroke="#000" stroke-width="1.2"/><rect x="4" y="5" width="4" height="1.5" fill="#000"/><rect x="4" y="8" width="8" height="1.3" fill="#000"/><rect x="4" y="11" width="8" height="1.3" fill="#000"/><polygon points="12,0 16,3 12,6" fill="#3aa03a" stroke="#1a5a1a" stroke-width="0.6"/></svg>
<div class="hsep" style="left:5px;top:297px;width:25px"></div>
<svg class="ab" style="left:10px;top:307px" width="17" height="17" viewBox="0 0 17 17"><rect x="1.5" y="2.5" width="9" height="11" fill="#e8e8e8" stroke="#b0b0b0"/><path d="M3,5 L9,5 M3,7 L9,7 M3,9 L9,9" stroke="#b8b8b8"/><path d="M13,0 L13,6 M10,3 L16,3" stroke="#b0b0b0" stroke-width="1.2"/></svg>
<svg class="ab" style="left:10px;top:330px" width="17" height="17" viewBox="0 0 17 17"><rect x="1.5" y="2.5" width="13" height="11" fill="#fff" stroke="#1a1a6a" stroke-width="1.6"/><rect x="2" y="3" width="4" height="10" fill="#1a2a8a"/><polygon points="9,1 14,6 10,10 6,6" fill="#c89090" stroke="#000" stroke-width="0.8"/></svg>
<svg class="ab" style="left:10px;top:353px" width="17" height="17" viewBox="0 0 17 17"><text x="1" y="8" font-family="Liberation Sans" font-weight="bold" font-size="8.5">ABC</text><path d="M2,10 L6,14 L15,8" stroke="#1a2aa0" stroke-width="2.2" fill="none"/></svg>
<div class="ab" style="left:7px;top:372px;width:23px;height:23px;background:#b8d4e4;border:1px solid #3a6a8a"></div>
<svg class="ab" style="left:10px;top:375px" width="17" height="17" viewBox="0 0 17 17"><text x="1.5" y="9" font-family="Liberation Sans" font-weight="bold" font-size="8.5">ABC</text><path d="M1,13 Q3,10 5,13 T9,13 T13,13 T16,12" stroke="#d02040" stroke-width="1.1" fill="none"/></svg>
<svg class="ab" style="left:11px;top:402px" width="15" height="12" viewBox="0 0 15 12"><rect x="1" y="3" width="5" height="7" rx="1" fill="#000"/><rect x="9" y="3" width="5" height="7" rx="1" fill="#000"/><rect x="2" y="1" width="3" height="3" fill="#000"/><rect x="10" y="1" width="3" height="3" fill="#000"/><rect x="5" y="4" width="5" height="3" fill="#000"/><rect x="2" y="6" width="1.5" height="2" fill="#fff"/><rect x="10" y="6" width="1.5" height="2" fill="#fff"/></svg>
<svg class="ab" style="left:10px;top:422px" width="17" height="17" viewBox="0 0 17 17"><rect x="1.5" y="1.5" width="14" height="13" fill="#fff" stroke="#000" stroke-width="1.2"/><path d="M1.5,5 L15.5,5 M5,5 L5,14.5" stroke="#000"/><path d="M6,8 L15,8 M6,11 L15,11" stroke="#666"/></svg>
<div class="hsep" style="left:5px;top:443px;width:25px"></div>
<svg class="ab" style="left:10px;top:453px" width="17" height="17" viewBox="0 0 17 17"><polygon points="1,6 13,6 9,10 9,13 5,13 5,10" fill="#fff" stroke="#000" stroke-width="1.2"/><path d="M14,0 L14,6 M11,3 L17,3" stroke="#909090" stroke-width="1.3"/></svg>
<svg class="ab" style="left:10px;top:476px" width="17" height="17" viewBox="0 0 17 17"><text x="0" y="8" font-family="Liberation Sans" font-weight="bold" font-size="9" fill="#1a2a8a">A</text><text x="7" y="15" font-family="Liberation Sans" font-weight="bold" font-size="9">Z</text><path d="M2,10 L6,13" stroke="#1a2aa0" stroke-width="1.2"/></svg>
<svg class="ab" style="left:10px;top:498px" width="17" height="17" viewBox="0 0 17 17"><text x="0" y="8" font-family="Liberation Sans" font-weight="bold" font-size="9" fill="#1a2a8a">Z</text><text x="7" y="15" font-family="Liberation Sans" font-weight="bold" font-size="9">A</text><path d="M2,10 L6,13" stroke="#1a2aa0" stroke-width="1.2"/></svg>
<div class="hsep" style="left:5px;top:520px;width:25px"></div>
<svg class="ab" style="left:10px;top:530px" width="17" height="17" viewBox="0 0 17 17"><rect x="1.5" y="1.5" width="6" height="3.5" fill="#fff" stroke="#000" stroke-width="1.2"/><rect x="8.5" y="1.5" width="6" height="3.5" fill="#fff" stroke="#000" stroke-width="1.2"/><rect x="1.5" y="6.5" width="7" height="3.5" fill="#fff" stroke="#000" stroke-width="1.2"/><rect x="1.5" y="10.5" width="7" height="3.5" fill="#fff" stroke="#000" stroke-width="1.2"/></svg>
<svg class="ab" style="left:10px;top:553px" width="17" height="17" viewBox="0 0 17 17"><rect x="1.5" y="1.5" width="6" height="3.5" fill="#f0f0f0" stroke="#a8a8a8" stroke-width="1.2"/><rect x="8.5" y="1.5" width="6" height="3.5" fill="#f0f0f0" stroke="#a8a8a8" stroke-width="1.2"/><rect x="1.5" y="6.5" width="7" height="3.5" fill="#f0f0f0" stroke="#a8a8a8" stroke-width="1.2"/><rect x="1.5" y="10.5" width="7" height="3.5" fill="#f0f0f0" stroke="#a8a8a8" stroke-width="1.2"/><path d="M10,8 L15,14 M15,8 L10,14" stroke="#a0a0a0" stroke-width="2"/></svg>
<div class="ab" style="left:888px;top:175px;width:16px;height:795px;background:#dcdcdc"></div>
<div class="ab" style="left:888px;top:175px;width:16px;height:4px;background:#000"></div>
<div class="btn" style="left:888px;top:179px;width:16px;height:16px"></div>
<svg class="ab" style="left:892px;top:184px" width="9" height="6" viewBox="0 0 9 6"><polygon points="0.5,5 8.5,5 4.5,0.5" fill="#a8a8a8"/></svg>
<div class="ab" style="left:888px;top:195px;width:16px;height:760px;background:#ececec"></div>
<div class="btn" style="left:888px;top:196px;width:16px;height:367px"></div>
<div class="btn" style="left:888px;top:954px;width:16px;height:16px"></div>
<svg class="ab" style="left:892px;top:960px" width="9" height="6" viewBox="0 0 9 6"><polygon points="0.5,0.5 8.5,0.5 4.5,5" fill="#000"/></svg>
<div class="ab" style="left:904px;top:175px;width:1px;height:812px;background:#fff"></div>
<div class="ab" style="left:33px;top:970px;width:871px;height:17px;background:#dcdcdc"></div>
<div class="ab" style="left:33px;top:970px;width:1px;height:16px;background:#000"></div>
<div class="btn" style="left:34px;top:970px;width:16px;height:15px"></div>
<div class="btn" style="left:50px;top:970px;width:16px;height:15px"></div>
<div class="btn" style="left:66px;top:970px;width:16px;height:15px"></div>
<div class="btn" style="left:82px;top:970px;width:16px;height:15px"></div>
<svg class="ab" style="left:37px;top:973px" width="10" height="9" viewBox="0 0 10 9"><rect x="1" y="0.5" width="1.5" height="8" fill="#000"/><polygon points="8,0.5 8,8.5 3.5,4.5" fill="#000"/></svg>
<svg class="ab" style="left:54px;top:973px" width="10" height="9" viewBox="0 0 10 9"><polygon points="6,0.5 6,8.5 1.5,4.5" fill="#000"/></svg>
<svg class="ab" style="left:70px;top:973px" width="10" height="9" viewBox="0 0 10 9"><polygon points="2,0.5 2,8.5 6.5,4.5" fill="#000"/></svg>
<svg class="ab" style="left:86px;top:973px" width="10" height="9" viewBox="0 0 10 9"><polygon points="1,0.5 1,8.5 5.5,4.5" fill="#000"/><rect x="7" y="0.5" width="1.5" height="8" fill="#000"/></svg>
<div class="ab" style="left:97px;top:985px;width:400px;height:1px;background:#000"></div>
<svg class="ab" style="left:97px;top:970px" width="402" height="16" viewBox="0 0 402 16"><polygon points="4,15.5 10,0.5 51,0.5 56,15.5" fill="#dcdcdc" stroke="#000" stroke-width="1"/><polygon points="102,15.5 108,0.5 149,0.5 154,15.5" fill="#dcdcdc" stroke="#000" stroke-width="1"/><polygon points="151,15.5 157,0.5 198,0.5 203,15.5" fill="#dcdcdc" stroke="#000" stroke-width="1"/><polygon points="200,15.5 206,0.5 247,0.5 252,15.5" fill="#dcdcdc" stroke="#000" stroke-width="1"/><polygon points="249,15.5 255,0.5 296,0.5 301,15.5" fill="#dcdcdc" stroke="#000" stroke-width="1"/><polygon points="298,15.5 304,0.5 345,0.5 350,15.5" fill="#dcdcdc" stroke="#000" stroke-width="1"/><polygon points="347,15.5 353,0.5 394,0.5 399,15.5" fill="#dcdcdc" stroke="#000" stroke-width="1"/><polygon points="53,15.5 59,0.5 100,0.5 105,15.5" fill="#fff" stroke="#000" stroke-width="1"/><line x1="53" y1="15.5" x2="105" y2="15.5" stroke="#fff"/></svg>
<div class="t" style="left:105px;width:45px;text-align:center;top:975px;font-size:10px;font-weight:normal;transform:scaleX(0.84)">Tabelle16</div>
<div class="t" style="left:154px;width:45px;text-align:center;top:975px;font-size:10px;font-weight:bold;transform:scaleX(0.84)">Tabelle17</div>
<div class="t" style="left:203px;width:45px;text-align:center;top:975px;font-size:10px;font-weight:normal;transform:scaleX(0.84)">Tabelle18</div>
<div class="t" style="left:252px;width:45px;text-align:center;top:975px;font-size:10px;font-weight:normal;transform:scaleX(0.84)">Tabelle19</div>
<div class="t" style="left:301px;width:45px;text-align:center;top:975px;font-size:10px;font-weight:normal;transform:scaleX(0.84)">Tabelle20</div>
<div class="t" style="left:350px;width:45px;text-align:center;top:975px;font-size:10px;font-weight:normal;transform:scaleX(0.84)">Tabelle21</div>
<div class="t" style="left:399px;width:45px;text-align:center;top:975px;font-size:10px;font-weight:normal;transform:scaleX(0.84)">Tabelle22</div>
<div class="t" style="left:448px;width:45px;text-align:center;top:975px;font-size:10px;font-weight:normal;transform:scaleX(0.84)">Tabelle23</div>
<div class="ab" style="left:497px;top:970px;width:2px;height:16px;background:#000"></div>
<div class="btn" style="left:499px;top:970px;width:16px;height:16px"></div>
<svg class="ab" style="left:503px;top:974px" width="8" height="9" viewBox="0 0 8 9"><polygon points="6,0.5 6,8.5 1.5,4.5" fill="#a8a8a8"/></svg>
<div class="ab" style="left:515px;top:970px;width:355px;height:16px;background:#e6e6e6"></div>
<div class="btn" style="left:515px;top:970px;width:151px;height:16px"></div>
<div class="btn" style="left:869px;top:970px;width:16px;height:16px"></div>
<svg class="ab" style="left:874px;top:974px" width="8" height="9" viewBox="0 0 8 9"><polygon points="2,0.5 2,8.5 6.5,4.5" fill="#000"/></svg>
<div class="ab" style="left:885px;top:970px;width:3px;height:16px;background:#000"></div>
<div class="ab" style="left:2px;top:987px;width:1274px;height:1px;background:#fff"></div>
<div class="ab" style="left:8px;top:990px;width:260px;height:25px;border-top:1px solid #8a8a8a;border-left:1px solid #8a8a8a;border-right:1px solid #fff;border-bottom:1px solid #fff"></div>
<div class="t" style="left:9px;top:997px;font-size:14.4px">Tabelle 15 / 24</div>
<div class="ab" style="left:274px;top:990px;width:312px;height:25px;border-top:1px solid #8a8a8a;border-left:1px solid #8a8a8a;border-right:1px solid #fff;border-bottom:1px solid #fff"></div>
<div class="t" style="left:275px;top:997px;font-size:14.4px">Standard</div>
<div class="ab" style="left:590px;top:990px;width:64px;height:25px;border-top:1px solid #8a8a8a;border-left:1px solid #8a8a8a;border-right:1px solid #fff;border-bottom:1px solid #fff"></div>
<div class="t" style="left:590px;width:64px;text-align:center;top:997px;font-size:14.4px">123%</div>
<div class="ab" style="left:657px;top:990px;width:52px;height:25px;border-top:1px solid #8a8a8a;border-left:1px solid #8a8a8a;border-right:1px solid #fff;border-bottom:1px solid #fff"></div>
<div class="ab" style="left:713px;top:990px;width:37px;height:25px;border-top:1px solid #8a8a8a;border-left:1px solid #8a8a8a;border-right:1px solid #fff;border-bottom:1px solid #fff"></div>
<div class="t" style="left:713px;width:37px;text-align:center;top:997px;font-size:14.4px">STD</div>
<div class="ab" style="left:755px;top:990px;width:23px;height:25px;border-top:1px solid #8a8a8a;border-left:1px solid #8a8a8a;border-right:1px solid #fff;border-bottom:1px solid #fff"></div>
<div class="ab" style="left:782px;top:990px;width:484px;height:25px;border-top:1px solid #8a8a8a;border-left:1px solid #8a8a8a;border-right:1px solid #fff;border-bottom:1px solid #fff"></div>
<div class="t" style="left:782px;width:484px;text-align:center;top:997px;font-size:14.4px">Summe=1,648721</div>
<div class="ab" style="left:0;top:1014px;width:1278px;height:2px;background:#fff"></div>
<div class="ab" style="left:3px;top:1016px;width:1275px;height:6px;background:linear-gradient(#3a78a8,#4a8cb8 40%,#2a7aa0 70%,#0a4a70)"></div>
<div class="ab" style="left:3px;top:1022px;width:1275px;height:1px;background:#d8f4ff"></div>
<div class="ab" style="left:2px;top:975px;width:1px;height:49px;background:#2a2a3a"></div>
<div class="ab" style="left:0;top:1023px;width:1280px;height:1px;background:#10142a"></div>
<div class="ab" style="left:906px;top:92px;width:9px;height:40px;background:#e4e4e4;border-right:1px solid #a0a0a0;border-bottom:1px solid #a0a0a0"></div>
<div class="ab" style="left:906px;top:133px;width:9px;height:40px;background:#e4e4e4;border-right:1px solid #a0a0a0;border-bottom:1px solid #a0a0a0"></div>
<svg class="ab" style="left:906px;top:92px" width="9" height="40" viewBox="0 0 9 40"><rect x="2" y="3" width="1" height="1" fill="#9a9a9a"/><rect x="3" y="4" width="1" height="1" fill="#fff"/><rect x="2" y="7" width="1" height="1" fill="#9a9a9a"/><rect x="3" y="8" width="1" height="1" fill="#fff"/><rect x="2" y="11" width="1" height="1" fill="#9a9a9a"/><rect x="3" y="12" width="1" height="1" fill="#fff"/><rect x="2" y="29" width="1" height="1" fill="#9a9a9a"/><rect x="3" y="30" width="1" height="1" fill="#fff"/><rect x="2" y="33" width="1" height="1" fill="#9a9a9a"/><rect x="3" y="34" width="1" height="1" fill="#fff"/><rect x="2" y="37" width="1" height="1" fill="#9a9a9a"/><rect x="3" y="38" width="1" height="1" fill="#fff"/><rect x="6" y="3" width="1" height="1" fill="#9a9a9a"/><rect x="7" y="4" width="1" height="1" fill="#fff"/><rect x="6" y="7" width="1" height="1" fill="#9a9a9a"/><rect x="7" y="8" width="1" height="1" fill="#fff"/><rect x="6" y="11" width="1" height="1" fill="#9a9a9a"/><rect x="7" y="12" width="1" height="1" fill="#fff"/><rect x="6" y="29" width="1" height="1" fill="#9a9a9a"/><rect x="7" y="30" width="1" height="1" fill="#fff"/><rect x="6" y="33" width="1" height="1" fill="#9a9a9a"/><rect x="7" y="34" width="1" height="1" fill="#fff"/><rect x="6" y="37" width="1" height="1" fill="#9a9a9a"/><rect x="7" y="38" width="1" height="1" fill="#fff"/><path d="M3,15 L7,20 L2,25" stroke="#9a9a9a" fill="none"/><path d="M7,21 L2,26" stroke="#000" stroke-width="1.2"/></svg>
<svg class="ab" style="left:906px;top:133px" width="9" height="40" viewBox="0 0 9 40"><rect x="2" y="3" width="1" height="1" fill="#9a9a9a"/><rect x="3" y="4" width="1" height="1" fill="#fff"/><rect x="2" y="7" width="1" height="1" fill="#9a9a9a"/><rect x="3" y="8" width="1" height="1" fill="#fff"/><rect x="2" y="11" width="1" height="1" fill="#9a9a9a"/><rect x="3" y="12" width="1" height="1" fill="#fff"/><rect x="2" y="31" width="1" height="1" fill="#9a9a9a"/><rect x="3" y="32" width="1" height="1" fill="#fff"/><rect x="2" y="35" width="1" height="1" fill="#9a9a9a"/><rect x="3" y="36" width="1" height="1" fill="#fff"/><rect x="6" y="3" width="1" height="1" fill="#9a9a9a"/><rect x="7" y="4" width="1" height="1" fill="#fff"/><rect x="6" y="7" width="1" height="1" fill="#9a9a9a"/><rect x="7" y="8" width="1" height="1" fill="#fff"/><rect x="6" y="11" width="1" height="1" fill="#9a9a9a"/><rect x="7" y="12" width="1" height="1" fill="#fff"/><rect x="6" y="31" width="1" height="1" fill="#9a9a9a"/><rect x="7" y="32" width="1" height="1" fill="#fff"/><rect x="6" y="35" width="1" height="1" fill="#9a9a9a"/><rect x="7" y="36" width="1" height="1" fill="#fff"/></svg>
<svg class="ab" style="left:905px;top:148px" width="11" height="11" viewBox="0 0 11 11"><ellipse cx="6" cy="5" rx="4" ry="3.5" fill="#d8d8d8" stroke="#222" stroke-width="1" transform="rotate(-30 6 5)"/><ellipse cx="6.5" cy="4" rx="2" ry="1.5" fill="#fff"/><path d="M0.5,10.5 L3,8" stroke="#000" stroke-width="1.2"/></svg>
<div class="ab" style="left:915px;top:92px;width:361px;height:895px;background:#dcdcdc;border-top:1px solid #fff;border-right:1px solid #9a9a9a;border-bottom:1px solid #8a8a8a"></div>
<div class="ab" style="left:1276px;top:26px;width:2px;height:990px;background:#eef4fa"></div>
<div class="btn" style="left:924px;top:103px;width:33px;height:33px"></div>
<div class="t" style="left:933px;top:111px;font-family:'Liberation Serif',serif;font-style:italic;font-weight:bold;font-size:14.4px">f<span style="font-size:11px">x</span></div>
<div class="sunk" style="left:971px;top:104px;width:293px;height:28px"></div>
<div class="t" style="left:974px;top:111px;font-size:14.4px">Mathematik</div>
<div class="btn" style="left:1247px;top:106px;width:17px;height:25px"></div>
<svg class="ab" style="left:1251px;top:115px" width="9" height="6" viewBox="0 0 9 6"><polygon points="0.5,0.5 8.5,0.5 4.5,5" fill="#000"/></svg>
<div class="sunk" style="left:925px;top:145px;width:340px;height:716px"></div>
<div class="t" style="left:927px;top:151px;font-size:14.4px">ARCCOT</div>
<div class="t" style="left:927px;top:174px;font-size:14.4px">ARCCOTHYP</div>
<div class="t" style="left:927px;top:197px;font-size:14.4px">ARCSIN</div>
<div class="t" style="left:927px;top:220px;font-size:14.4px">ARCSINHYP</div>
<div class="t" style="left:927px;top:243px;font-size:14.4px">ARCTAN</div>
<div class="t" style="left:927px;top:266px;font-size:14.4px">ARCTAN2</div>
<div class="t" style="left:927px;top:289px;font-size:14.4px">ARCTANHYP</div>
<div class="t" style="left:927px;top:312px;font-size:14.4px">AUFRUNDEN</div>
<div class="t" style="left:927px;top:335px;font-size:14.4px">COS</div>
<div class="t" style="left:927px;top:358px;font-size:14.4px">COSHYP</div>
<div class="t" style="left:927px;top:381px;font-size:14.4px">COT</div>
<div class="t" style="left:927px;top:404px;font-size:14.4px">COTHYP</div>
<div class="t" style="left:927px;top:427px;font-size:14.4px">DEG</div>
<div class="ab" style="left:927px;top:445px;width:321px;height:23px;background:#0d5a8a"></div>
<div class="t" style="left:927px;top:450px;font-size:14.4px;color:#fff">EXP</div>
<div class="t" style="left:927px;top:473px;font-size:14.4px">FAKULTÄT</div>
<div class="t" style="left:927px;top:496px;font-size:14.4px">GANZZAHL</div>
<div class="t" style="left:927px;top:519px;font-size:14.4px">GERADE</div>
<div class="t" style="left:927px;top:542px;font-size:14.4px">GGT</div>
<div class="t" style="left:927px;top:565px;font-size:14.4px">GGT_ADD</div>
<div class="t" style="left:927px;top:588px;font-size:14.4px">ISTGERADE</div>
<div class="t" style="left:927px;top:611px;font-size:14.4px">ISTUNGERADE</div>
<div class="t" style="left:927px;top:634px;font-size:14.4px">KGV</div>
<div class="t" style="left:927px;top:657px;font-size:14.4px">KGV_ADD</div>
<div class="t" style="left:927px;top:680px;font-size:14.4px">KOMBINATIONEN</div>
<div class="t" style="left:927px;top:703px;font-size:14.4px">KOMBINATIONEN2</div>
<div class="t" style="left:927px;top:726px;font-size:14.4px">KÜRZEN</div>
<div class="t" style="left:927px;top:749px;font-size:14.4px">LN</div>
<div class="t" style="left:927px;top:772px;font-size:14.4px">LOG</div>
<div class="t" style="left:927px;top:795px;font-size:14.4px">LOG10</div>
<div class="t" style="left:927px;top:818px;font-size:14.4px">OBERGRENZE</div>
<div class="t" style="left:927px;top:841px;font-size:14.4px">PI</div>
<div class="ab" style="left:1248px;top:146px;width:16px;height:714px;background:#ececec"></div>
<div class="btn" style="left:1248px;top:146px;width:16px;height:16px"></div>
<svg class="ab" style="left:1252px;top:151px" width="9" height="6" viewBox="0 0 9 6"><polygon points="0.5,5 8.5,5 4.5,0.5" fill="#000"/></svg>
<div class="btn" style="left:1248px;top:218px;width:16px;height:340px"></div>
<div class="btn" style="left:1248px;top:844px;width:16px;height:16px"></div>
<svg class="ab" style="left:1252px;top:849px" width="9" height="6" viewBox="0 0 9 6"><polygon points="0.5,0.5 8.5,0.5 4.5,5" fill="#000"/></svg>
<div class="ab" style="left:925px;top:872px;width:340px;height:108px;background:#dcdcdc;border-top:1px solid #000;border-left:1px solid #000;border-right:1px solid #fff;border-bottom:1px solid #fff;box-shadow:inset 1px 1px 0 #3a3a3a,-1px -1px 0 #9a9a9a"></div>
<div class="t" style="left:926px;top:879px;font-size:14.4px">EXP:</div>
<div class="t" style="left:926px;top:922px;font-size:14.4px">Zahl</div>
<div class="t" style="left:930px;top:944px;font-size:14.4px">Berechnet die Exponentialfunktion zur Basis e.</div>
</body></html>
